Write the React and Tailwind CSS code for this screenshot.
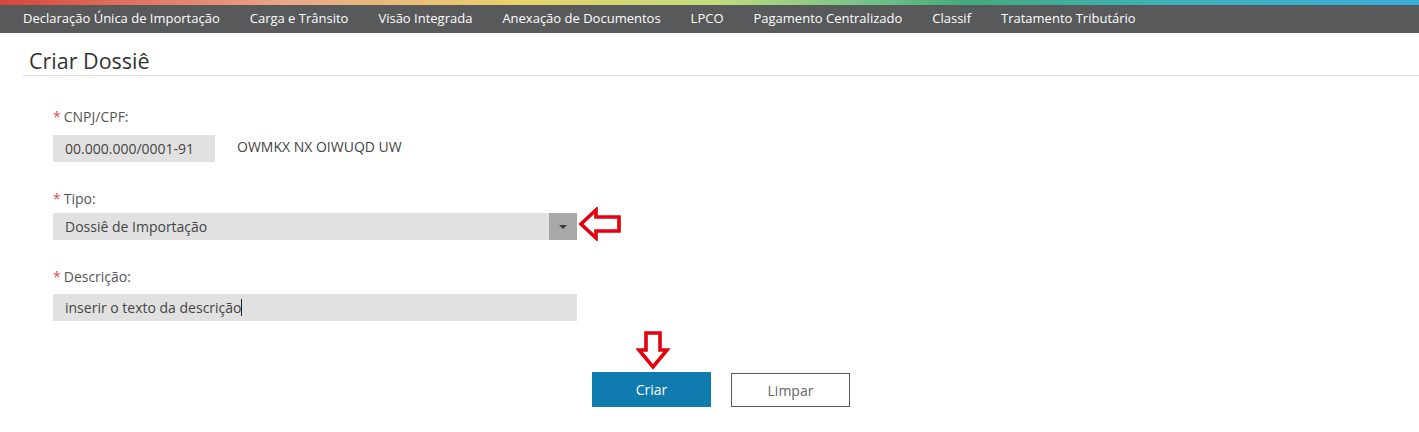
import React from "react";

const navItems = [
  "Declaração Única de Importação",
  "Carga e Trânsito",
  "Visão Integrada",
  "Anexação de Documentos",
  "LPCO",
  "Pagamento Centralizado",
  "Classif",
  "Tratamento Tributário",
];

function Req() {
  return <span className="text-[#d9534f] mr-[3px]">*</span>;
}

function LeftArrow() {
  return (
    <svg width="44" height="34" viewBox="0 0 44 34" className="absolute left-[525px] top-[-6px]">
      <path
        d="M3 17 L18 3 L18 10 L41 10 L41 24 L18 24 L18 31 Z"
        fill="white"
        stroke="#e3000f"
        strokeWidth="3.6"
        strokeLinejoin="miter"
      />
    </svg>
  );
}

function DownArrow() {
  return (
    <svg width="34" height="40" viewBox="0 0 34 40" className="absolute left-[44px] top-[-41px]">
      <path
        d="M10 2 L24 2 L24 19 L31 19 L17 36 L3 19 L10 19 Z"
        fill="white"
        stroke="#e3000f"
        strokeWidth="3.6"
        strokeLinejoin="miter"
      />
    </svg>
  );
}

export default function App() {
  return (
    <div className="w-[1419px] h-[432px] bg-white overflow-hidden font-['Open_Sans',sans-serif]">
      <div className="h-[5px] bg-[linear-gradient(to_right,#d8453a_0%,#e9a78a_20%,#ead06a_36%,#c3dc7c_50%,#7dc689_60%,#43aa7c_68%,#3fb0b8_82%,#3aaedb_100%)]" />
      <nav className="h-[28px] bg-[#58595b] flex items-center pl-[23px] gap-[30px] text-white text-[13px]">
        {navItems.map((n) => (
          <span key={n} className="whitespace-nowrap">{n}</span>
        ))}
      </nav>
      <div className="ml-[22px] mt-[14px] border-b border-[#e2e2e2] pl-[7px]">
        <h1 className="text-[21.5px] leading-[28px] text-[#333]">Criar Dossiê</h1>
      </div>

      <div className="pl-[53px] pt-[32px] text-[14px] text-[#444]">
        <div className="leading-[18px] text-[#555]"><Req />CNPJ/CPF:</div>
        <div className="mt-[9px] flex items-center">
          <div className="w-[162px] h-[27px] bg-[#e1e1e2] pl-[12px] flex items-center text-[#444]">00.000.000/0001-91</div>
          <div className="ml-[22px] text-[#444] -mt-[5px]">OWMKX NX OIWUQD UW</div>
        </div>

        <div className="mt-[28px] leading-[18px] text-[#555]"><Req />Tipo:</div>
        <div className="relative mt-[5px] w-[524px] h-[27px] bg-[#e1e1e2] flex items-center">
          <span className="pl-[12px] flex-1">Dossiê de Importação</span>
          <div className="w-[28px] h-full bg-[#a8a8a8] flex items-center justify-center">
            <svg width="8" height="4" viewBox="0 0 8 4"><path d="M0 0 L8 0 L4 4 Z" fill="#3a3a3a" /></svg>
          </div>
          <LeftArrow />
        </div>

        <div className="mt-[28px] leading-[18px] text-[#555]"><Req />Descrição:</div>
        <div className="mt-[8px] w-[524px] h-[27px] bg-[#e1e1e2] flex items-center pl-[12px]">
          <span>inserir o texto da descrição</span>
          <span className="w-[1px] h-[17px] bg-[#222] -ml-[1px]" />
        </div>

        <div className="mt-[51px] flex justify-start pl-[539px] gap-[20px]">
          <div className="relative">
            <button className="w-[119px] h-[35px] bg-[#0f7baf] text-white text-[14px]">Criar</button>
            <DownArrow />
          </div>
          <button className="w-[119px] h-[34px] border border-[#5a5a5a] bg-white text-[#666] text-[14px] mt-[1px]">Limpar</button>
        </div>
      </div>
    </div>
  );
}
